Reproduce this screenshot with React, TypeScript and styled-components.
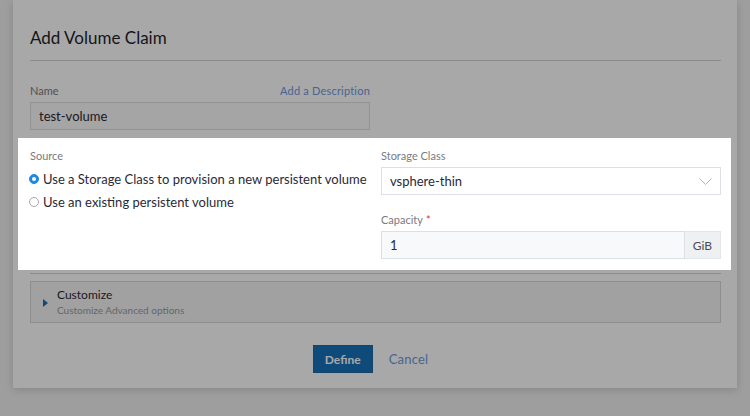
import styled, { createGlobalStyle } from "styled-components";

const GlobalStyle = createGlobalStyle`
  html, body {
    margin: 0;
    padding: 0;
    background: #f0f0f0;
    overflow: hidden;
    font-family: Lato, "Open Sans", Arial, sans-serif;
  }
`;

const Page = styled.div`
  width: 750px;
  height: 416px;
  padding: 0 13px;
  box-sizing: border-box;
`;

const Modal = styled.div`
  background: #fff;
  padding: 28px 16px 15px 17px;
  box-shadow: 0 2px 8px rgba(0, 0, 0, 0.15);
  color: #2a2a35;
`;

const Title = styled.h2`
  margin: 0;
  font-size: 17px;
  font-weight: 400;
  line-height: 20px;
  padding-bottom: 12px;
  border-bottom: 1px solid #d4d4d4;
  color: #1f1f2a;
`;

const Row = styled.div`
  display: grid;
  grid-template-columns: 1fr 1fr;
  column-gap: 11px;
`;

const NameRow = styled(Row)`
  margin-top: 22px;
`;

const Spotlight = styled(Row)`
  position: relative;
  z-index: 1;
  background: #fff;
  margin: 8px -10px 0 -12px;
  padding: 10px 10px 11px 12px;
  box-shadow: 0 0 0 2000px rgba(0, 0, 0, 0.34);
`;

const Field = styled.div<{ $gap?: number }>`
  display: flex;
  flex-direction: column;
  margin-top: ${(p) => p.$gap ?? 0}px;
`;

const LabelRow = styled.div`
  display: flex;
  justify-content: space-between;
  align-items: center;
  height: 14px;
  margin-bottom: 5px;
`;

const Label = styled.span`
  font-size: 11px;
  color: #7a7a80;
`;

const Required = styled.span`
  color: #e0313a;
  margin-left: 3px;
`;

const Link = styled.a`
  font-size: 11px;
  color: #6f98de;
  letter-spacing: 0.2px;
  cursor: pointer;
`;

const Input = styled.div<{ $bg?: string; $grow?: boolean }>`
  height: 28px;
  box-sizing: border-box;
  border: 1px solid #dcdfe3;
  background: ${(p) => p.$bg ?? "#fff"};
  display: flex;
  align-items: center;
  padding: 0 8px;
  font-size: 13px;
  color: #2a2a35;
  flex: ${(p) => (p.$grow ? "1 1 auto" : "none")};
`;

const Select = styled(Input)`
  justify-content: space-between;
  padding-right: 8px;
`;

const Group = styled.div`
  display: flex;
  height: 28px;
`;

const Addon = styled.div`
  width: 36px;
  box-sizing: border-box;
  border: 1px solid #e4e7ea;
  border-left: none;
  background: #eef0f2;
  display: flex;
  align-items: center;
  justify-content: center;
  font-size: 12px;
  color: #4a4a55;
`;

const RadioList = styled.div`
  display: flex;
  flex-direction: column;
`;

const RadioItem = styled.label`
  display: flex;
  align-items: center;
  height: 23px;
  font-size: 13px;
  color: #2a2a35;
  gap: 4px;
`;

const RadioDot = styled.span<{ $checked?: boolean }>`
  width: 10px;
  height: 10px;
  border-radius: 50%;
  box-sizing: border-box;
  margin-left: -1px;
  flex: none;
  background: ${(p) => (p.$checked ? "#1e88e5" : "#fff")};
  border: 1px solid ${(p) => (p.$checked ? "#1e88e5" : "#a8a8a8")};
  display: flex;
  align-items: center;
  justify-content: center;
  &::after {
    content: "";
    width: 4px;
    height: 4px;
    border-radius: 50%;
    background: #fff;
    display: ${(p) => (p.$checked ? "block" : "none")};
  }
`;

const Divider = styled.div`
  height: 1px;
  background: #d4d4d4;
  margin-top: 3px;
`;

const Accordion = styled.div`
  margin-top: 7px;
  height: 42px;
  box-sizing: border-box;
  border: 1px solid #d8d8d8;
  background: #f5f5f5;
  display: flex;
  align-items: center;
  padding-left: 12px;
`;

const Caret = styled.span`
  width: 0;
  height: 0;
  border-top: 4px solid transparent;
  border-bottom: 4px solid transparent;
  border-left: 5px solid #1773ba;
  margin-right: 9px;
  margin-top: 2px;
`;

const AccTitle = styled.div`
  font-size: 12px;
  color: #2a2a35;
  line-height: 15px;
`;

const AccSub = styled.div`
  font-size: 10px;
  color: #9a9aa0;
  line-height: 14px;
  margin-top: 1px;
`;

const Footer = styled.div`
  display: flex;
  justify-content: center;
  align-items: center;
  gap: 16px;
  margin-top: 22px;
  padding-right: 10px;
`;

const Button = styled.button`
  height: 28px;
  width: 60px;
  border: 1px solid #1f6aa0;
  background: #1773ba;
  color: #fff;
  font-family: inherit;
  font-size: 12px;
  font-weight: 700;
  padding: 0;
`;

const CancelLink = styled(Link)`
  font-size: 13px;
`;

const Chevron = () => (
  <svg width="13" height="7" viewBox="0 0 13 7" fill="none">
    <path d="M0.5 0.5l6 6 6-6" stroke="#b4b4ba" strokeWidth="1" />
  </svg>
);

export default function App() {
  return (
    <Page>
      <GlobalStyle />
      <Modal>
        <Title>Add Volume Claim</Title>
        <NameRow>
          <Field>
            <LabelRow>
              <Label>Name</Label>
              <Link>Add a Description</Link>
            </LabelRow>
            <Input $bg="#fafafa">test-volume</Input>
          </Field>
        </NameRow>
        <Spotlight>
          <Field>
            <LabelRow>
              <Label>Source</Label>
            </LabelRow>
            <RadioList>
              <RadioItem>
                <RadioDot $checked />
                Use a Storage Class to provision a new persistent volume
              </RadioItem>
              <RadioItem>
                <RadioDot />
                Use an existing persistent volume
              </RadioItem>
            </RadioList>
          </Field>
          <div>
            <Field>
              <LabelRow>
                <Label>Storage Class</Label>
              </LabelRow>
              <Select>
                vsphere-thin
                <Chevron />
              </Select>
            </Field>
            <Field $gap={17}>
              <LabelRow>
                <Label>
                  Capacity<Required>*</Required>
                </Label>
              </LabelRow>
              <Group>
                <Input $bg="#f8f9fb" $grow>
                  1
                </Input>
                <Addon>GiB</Addon>
              </Group>
            </Field>
          </div>
        </Spotlight>
        <Divider />
        <Accordion>
          <Caret />
          <div>
            <AccTitle>Customize</AccTitle>
            <AccSub>Customize Advanced options</AccSub>
          </div>
        </Accordion>
        <Footer>
          <Button>Define</Button>
          <CancelLink>Cancel</CancelLink>
        </Footer>
      </Modal>
    </Page>
  );
}
